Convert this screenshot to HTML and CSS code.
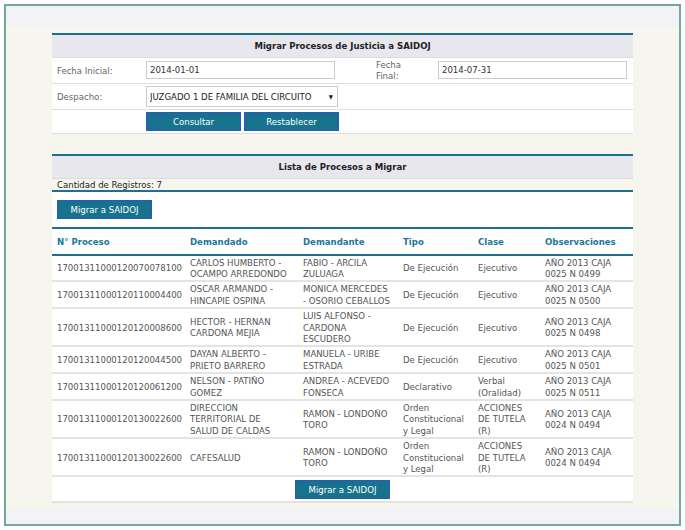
FILE: index.html
```html
<!DOCTYPE html>
<html lang="es">
<head>
<meta charset="utf-8">
<title>Migrar Procesos de Justicia a SAIDOJ</title>
<link rel="stylesheet" href="styles.css">
</head>
<body>
<div class="frame">
  <div class="band-top"></div>
  <div class="content">
    <div class="panel form-panel">
      <div class="panel-title">Migrar Procesos de Justicia a SAIDOJ</div>
      <table class="form-table">
        <colgroup><col class="c-l1"><col class="c-i1"><col class="c-l2"><col class="c-i2"></colgroup>
        <tr>
          <td class="lbl">Fecha Inicial:</td>
          <td><div class="input">2014-01-01</div></td>
          <td class="lbl lbl2">Fecha<br>Final:</td>
          <td><div class="input input2">2014-07-31</div></td>
        </tr>
        <tr>
          <td class="lbl">Despacho:</td>
          <td><div class="select"><span class="sel-text">JUZGADO 1 DE FAMILIA DEL CIRCUITO</span><span class="sel-arrow">&#9660;</span></div></td>
          <td></td>
          <td></td>
        </tr>
        <tr class="btn-row">
          <td></td>
          <td colspan="3"><div class="btns"><span class="btn">Consultar</span><span class="btn">Restablecer</span></div></td>
        </tr>
      </table>
    </div>

    <div class="panel list-panel">
      <div class="panel-title">Lista de Procesos a Migrar</div>
      <div class="count">Cantidad de Registros: 7</div>
      <div class="top-actions"><span class="btn">Migrar a SAIDOJ</span></div>
      <table class="grid">
        <colgroup><col class="g1"><col class="g2"><col class="g3"><col class="g4"><col class="g5"><col class="g6"></colgroup>
        <thead>
          <tr><th>N° Proceso</th><th>Demandado</th><th>Demandante</th><th>Tipo</th><th>Clase</th><th>Observaciones</th></tr>
        </thead>
        <tbody>
          <tr><td>17001311000120070078100</td><td>CARLOS HUMBERTO - OCAMPO ARREDONDO</td><td>FABIO - ARCILA ZULUAGA</td><td>De Ejecución</td><td>Ejecutivo</td><td>AÑO 2013 CAJA 0025 N 0499</td></tr>
          <tr><td>17001311000120110004400</td><td>OSCAR ARMANDO - HINCAPIE OSPINA</td><td>MONICA MERCEDES - OSORIO CEBALLOS</td><td>De Ejecución</td><td>Ejecutivo</td><td>AÑO 2013 CAJA 0025 N 0500</td></tr>
          <tr><td>17001311000120120008600</td><td>HECTOR - HERNAN CARDONA MEJIA</td><td>LUIS ALFONSO - CARDONA ESCUDERO</td><td>De Ejecución</td><td>Ejecutivo</td><td>AÑO 2013 CAJA 0025 N 0498</td></tr>
          <tr><td>17001311000120120044500</td><td>DAYAN ALBERTO - PRIETO BARRERO</td><td>MANUELA - URIBE ESTRADA</td><td>De Ejecución</td><td>Ejecutivo</td><td>AÑO 2013 CAJA 0025 N 0501</td></tr>
          <tr><td>17001311000120120061200</td><td>NELSON - PATIÑO GOMEZ</td><td>ANDREA - ACEVEDO FONSECA</td><td>Declarativo</td><td>Verbal (Oralidad)</td><td>AÑO 2013 CAJA 0025 N 0511</td></tr>
          <tr><td>17001311000120130022600</td><td>DIRECCION TERRITORIAL DE SALUD DE CALDAS</td><td>RAMON - LONDOÑO TORO</td><td>Orden Constitucional y Legal</td><td>ACCIONES DE TUTELA (R)</td><td>AÑO 2013 CAJA 0024 N 0494</td></tr>
          <tr><td>17001311000120130022600</td><td>CAFESALUD</td><td>RAMON - LONDOÑO TORO</td><td>Orden Constitucional y Legal</td><td>ACCIONES DE TUTELA (R)</td><td>AÑO 2013 CAJA 0024 N 0494</td></tr>
        </tbody>
      </table>
      <div class="bottom-actions"><span class="btn">Migrar a SAIDOJ</span></div>
    </div>
  </div>
  <div class="band-bottom"></div>
</div>
</body>
</html>
```

FILE: styles.css
```css
html, body {
  margin: 0;
  padding: 0;
  background: #ffffff;
}
body {
  font-family: "DejaVu Sans Condensed", "DejaVu Sans", sans-serif;
  font-size: 9.5px;
  color: #555555;
}
.frame {
  margin: 4px 4px 0 4px;
  width: 673px;
  height: 518px;
  border: 2px solid #74a79f;
  background: #f6f6ef;
  display: flex;
  flex-direction: column;
  overflow: hidden;
}
.band-top {
  flex: 0 0 20px;
  background: #f3f3f7;
}
.band-bottom {
  flex: 0 0 16px;
  background: #f3f3f7;
}
.content {
  flex: 1 1 auto;
  min-height: 0;
  padding: 7px 0 0 46px;
}
.panel {
  width: 581px;
}
.panel-title {
  border-top: 2px solid #1f6f8f;
  background: #e8e7ee;
  height: 22px;
  line-height: 22px;
  text-align: center;
  font-weight: bold;
  color: #222222;
  border-bottom: 1px solid #dcdcdc;
}
.form-table {
  width: 581px;
  border-collapse: collapse;
  table-layout: fixed;
  background: #ffffff;
}
.c-l1 { width: 89px; }
.c-i1 { width: 229px; }
.c-l2 { width: 63px; }
.c-i2 { width: 200px; }
.form-table td {
  border-bottom: 1px solid #dedede;
  padding: 2px 5px;
  height: 10px;
  box-sizing: border-box;
  vertical-align: middle;
}
.form-table tr {
  height: 25px;
}
.form-table td.lbl {
  color: #666666;
}
.form-table td.lbl2 {
  padding: 1px 5px 1px 6px;
  line-height: 11px;
}
.input {
  width: 181px;
  height: 16px;
  line-height: 16px;
  border: 1px solid #cccccc;
  padding: 0 3px;
  color: #333333;
  background: #ffffff;
}
.select {
  width: 183px;
  height: 19px;
  border: 1px solid #cccccc;
  display: flex;
  align-items: center;
  padding: 0 4px 0 3px;
  color: #222222;
  background: #ffffff;
}
.sel-text {
  flex: 1;
  overflow: hidden;
  white-space: nowrap;
}
.sel-arrow {
  font-size: 6px;
  margin-left: 6px;
  color: #222222;
}
.form-table tr.btn-row {
  height: 24px;
}
.form-table tr.btn-row td {
  padding-top: 2px;
  padding-bottom: 2px;
}
.btns {
  display: flex;
  gap: 3px;
}
.btn {
  display: inline-block;
  width: 95px;
  height: 19px;
  line-height: 17px;
  background: #17728d;
  color: #ffffff;
  border: 1px solid #2f54c4;
  text-align: center;
  box-sizing: border-box;
  vertical-align: top;
}
.list-panel {
  margin-top: 20px;
}
.count {
  height: 11px;
  line-height: 12px;
  padding: 0 5px;
  color: #222222;
  border-bottom: 2px solid #1f6f8f;
}
.top-actions {
  background: #ffffff;
  padding: 8px 5px 8px;
  height: 19px;
  border-bottom: 2px solid #1f6f8f;
}
.grid {
  width: 581px;
  border-collapse: collapse;
  table-layout: fixed;
  background: #ffffff;
}
.g1 { width: 133px; }
.g2 { width: 113px; }
.g3 { width: 100px; }
.g4 { width: 75px; }
.g5 { width: 67px; }
.g6 { width: 93px; }
.grid th {
  text-align: left;
  color: #1b7898;
  font-weight: bold;
  height: 25px;
  padding: 0 5px;
  border-bottom: 2px solid #1f6f8f;
}
.grid td {
  padding: 1px 5px;
  line-height: 11.4px;
  border-bottom: 2px solid #e4e4e4;
  vertical-align: middle;
  color: #555555;
}
.grid td:nth-child(2) {
  padding-right: 8px;
}
.bottom-actions {
  background: #ffffff;
  text-align: center;
  padding: 3px 0 2px;
  height: 19px;
  border-bottom: 2px solid #e2e2e2;
}
```
